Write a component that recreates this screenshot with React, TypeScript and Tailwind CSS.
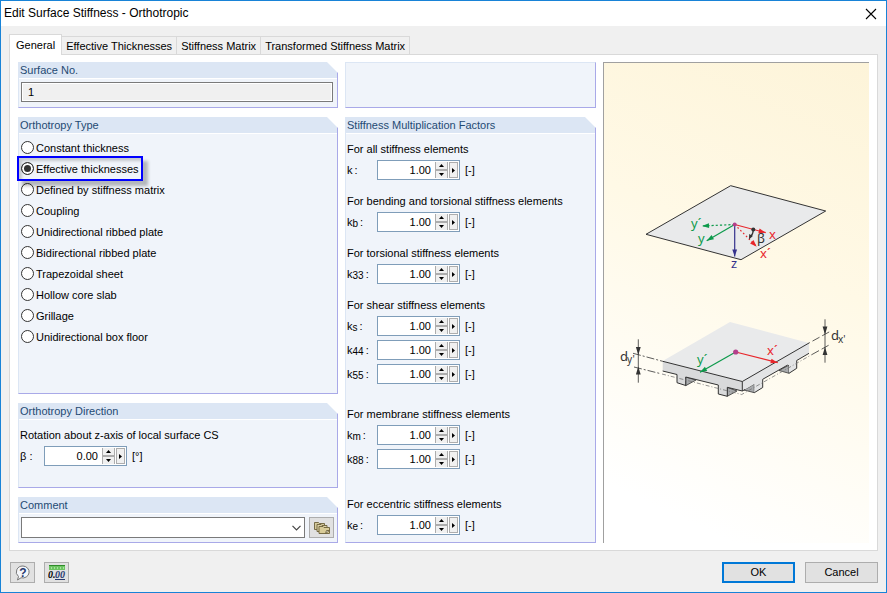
import { useState } from "react";
import type { ReactNode } from "react";

const tabs = ["General", "Effective Thicknesses", "Stiffness Matrix", "Transformed Stiffness Matrix"];

const orthotropyTypes = [
  "Constant thickness",
  "Effective thicknesses",
  "Defined by stiffness matrix",
  "Coupling",
  "Unidirectional ribbed plate",
  "Bidirectional ribbed plate",
  "Trapezoidal sheet",
  "Hollow core slab",
  "Grillage",
  "Unidirectional box floor",
];

const factorGroups = [
  { title: "For all stiffness elements", subs: [""], space: "" },
  { title: "For bending and torsional stiffness elements", subs: ["b"], space: "" },
  { title: "For torsional stiffness elements", subs: ["33"], space: "" },
  { title: "For shear stiffness elements", subs: ["s", "44", "55"], space: "" },
  { title: "For membrane stiffness elements", subs: ["m", "88"], space: "pt-[9px]" },
  { title: "For eccentric stiffness elements", subs: ["e"], space: "pt-[14px]" },
];

function Box({ title, className = "", children }: { title: string; className?: string; children: ReactNode }) {
  return (
    <section className={`relative border-r border-b border-l border-r-[#a9a9e8] border-b-[#a9a9e8] border-l-[#dce6f4] bg-[#f0f4fa] ${className}`}>
      {/* Cut corner */}
      <span className="absolute top-0 -right-px size-[11px] bg-white [clip-path:polygon(0_0,100%_0,100%_100%)]" />
      <h2 className="h-[17px] border-b border-white bg-[#dce6f4] pl-px text-[11px] leading-4 text-[#1f4a73]">{title}</h2>
      {children}
    </section>
  );
}

function Spinner({ id, initial }: { id: string; initial: string }) {
  const [value, setValue] = useState(initial);
  const step = (d: number) => setValue((v) => (Number(v) + d).toFixed(2));

  return (
    <div className="flex h-5 w-[83px] items-center border border-[#7f9db9] bg-white pr-px">
      <input
        id={id}
        value={value}
        onChange={(e) => setValue(e.target.value)}
        className="h-full min-w-0 flex-1 pr-1 text-right text-[11px] outline-none"
      />
      <div className="mr-px flex h-4 w-[13px] flex-col divide-y-2 divide-[#adadad] border-x border-[#adadad] bg-[#f0f0f0]">
        <button type="button" aria-label="Increase" onClick={() => step(1)} className="flex flex-1 items-center justify-center">
          <svg viewBox="0 0 5 3" className="h-[3px] w-[5px]"><path d="M0 3 2.5 0 5 3z" /></svg>
        </button>
        <button type="button" aria-label="Decrease" onClick={() => step(-1)} className="flex flex-1 items-center justify-center">
          <svg viewBox="0 0 5 3" className="h-[3px] w-[5px]"><path d="M0 0h5L2.5 3z" /></svg>
        </button>
      </div>
      <button type="button" aria-label="More" className="flex h-4 w-[9px] items-center justify-center border border-[#adadad] bg-[#f0f0f0]">
        <svg viewBox="0 0 3 5" className="h-[5px] w-[3px]"><path d="M0 0 3 2.5 0 5z" /></svg>
      </button>
    </div>
  );
}

function Arrow({ x1, y1, x2, y2, color, dash }: { x1: number; y1: number; x2: number; y2: number; color: string; dash?: string }) {
  const angle = (Math.atan2(y2 - y1, x2 - x1) * 180) / Math.PI;
  return (
    <g>
      <line x1={x1} y1={y1} x2={x2} y2={y2} stroke={color} strokeWidth="1.2" strokeDasharray={dash} />
      <path d="M0 0-7-2.4V2.4z" fill={color} transform={`translate(${x2} ${y2}) rotate(${angle})`} />
    </g>
  );
}

function Diagram() {
  const red = "#e8262b";
  const green = "#0d9a4b";
  const blue = "#35318c";
  const dark = "#333333";

  return (
    <svg viewBox="604 63 265 480" className="h-full w-full font-['Noto_Sans',sans-serif]" fontSize="13" role="img" aria-label="Orthotropy axes and thicknesses">
      {/* Plan of the surface */}
      <path d="M646 234.3 730.7 185.7 825.7 211 741 259.7z" fill="#e9eaeb" stroke="#333" strokeWidth="1" />
      <Arrow x1={734.7} y1={224.5} x2={702} y2={226} color={green} dash="2.2 2" />
      <Arrow x1={734.7} y1={224.5} x2={706.7} y2={240.7} color={green} />
      <Arrow x1={734.7} y1={224.5} x2={765.7} y2={232.7} color={red} />
      <Arrow x1={734.7} y1={224.5} x2={756.7} y2={246.7} color={red} dash="1.6 2.4" />
      <Arrow x1={734.7} y1={224.5} x2={734.7} y2={256.5} color={blue} />
      <path d="M753.3 229.3Q753.3 234 750.5 237" fill="none" stroke={dark} strokeWidth="1.2" />
      <path d="m749 239.5.2-5.5 3.6 2z" fill={dark} />
      <circle cx="753.3" cy="229.5" r="2" fill={dark} />
      <circle cx="734.7" cy="224.5" r="2" fill="#b4408b" />
      <text x="691" y="228" fill={green}>y´</text>
      <text x="698" y="243" fill={green}>y</text>
      <text x="769" y="239" fill={red}>x</text>
      <text x="760" y="258" fill={red}>x´</text>
      <text x="757" y="243" fill={dark}>β</text>
      <text x="731" y="268" fill={blue}>z</text>

      {/* Ribbed slab */}
      <path d="M662.7 361 730 322 809 343 742.3 381.5z" fill="#e9eaeb" />
      <g stroke="#333" strokeWidth=".8" strokeLinejoin="round">
        <path d="M685.7 377V385.7L696 380zM727.3 387.3V396.3L737 391z" fill="#a9abad" />
        <path d="M754.3 384V392.7L744 390zM789 365V373.3L779 370.5z" fill="#a9abad" />
      </g>
      <path d="M662.7 361.3V371L677 374.5V382.7L685.7 385.5V377L718.3 385V394L727.3 396.3V387.3L742.3 391V381.5z" fill="#d9dadb" />
      <path d="M742.3 381.5V391L754.3 384V392.7L762.7 387.5V379.3L789 364.5V373.3L796.7 368.3V360.5L809 353.3V343z" fill="#e3e4e5" />
      <g fill="none" stroke="#333" strokeWidth="1">
        <path d="M662.7 361.3 742.3 381.5 809 343M742.3 381.5V391" />
        <path d="M662.7 371 677 374.5V382.7L685.7 385.5V377L718.3 385V394L727.3 396.3V387.3L742.3 391" />
        <path d="M742.3 391 745 389.5M754.3 392.7 762.7 387.5V379.3L787.7 365M789 373.3 796.7 368.3V360.5L809 353.3" />
      </g>
      <g fill="none" stroke="#333" strokeWidth=".8">
        <path d="M633 353.3 662.7 361.3" strokeDasharray="8 2 2 2" />
        <path d="M809 343 830 331.5" strokeDasharray="8 3" strokeDashoffset="-4" />
        <path d="M634 367 660 373.5" strokeDasharray="8 2 2 2" />
        <path d="M662 374 741.7 394.5 812 354.5" stroke="#777" strokeDasharray="4 2 1 2" />
        <path d="M812 354.5 830 344.5" strokeDasharray="8 3" />
        <path d="M638.3 339.3V382.7M825 319.3V362.7" />
      </g>
      <g fill={dark}>
        <path d="m638.3 355-2.4-8h4.8zM638.3 366.5l-2.4 8h4.8zM825 334.5l-2.4-8h4.8zM825 347l-2.4 8h4.8z" />
        <text x="620" y="361">d</text>
        <text x="627" y="363" fontSize="10">y'</text>
        <text x="831" y="340">d</text>
        <text x="838" y="343" fontSize="10">x'</text>
      </g>
      <Arrow x1={735.7} y1={352} x2={777.7} y2={362.7} color={red} />
      <Arrow x1={735.7} y1={352} x2={700} y2={372.3} color={green} />
      <circle cx="735.7" cy="352" r="2.6" fill="#b4408b" />
      <text x="767" y="355" fill={red}>x´</text>
      <text x="697" y="364" fill={green}>y´</text>
    </svg>
  );
}

const iconButton = "flex h-[21px] w-[25px] items-center justify-center border border-[#adadad] bg-[#e1e1e1]";

export default function App() {
  const [tab, setTab] = useState(tabs[0]);
  const [type, setType] = useState("Effective thicknesses");

  return (
    <main className="flex min-h-screen flex-col border border-[#1883d7] bg-[#f0f0f0] font-['Liberation_Sans',Arial,sans-serif] text-[11px] leading-4 text-black">
      <header className="flex h-[25px] items-center justify-between bg-white pr-[9px] pl-[3px]">
        <h1 className="pb-px text-xs">Edit Surface Stiffness - Orthotropic</h1>
        <button type="button" aria-label="Close">
          <svg viewBox="0 0 12 12" className="size-3" fill="none" stroke="#000" strokeWidth="1.1">
            <path d="M1 1 11 11M11 1 1 11" />
          </svg>
        </button>
      </header>

      <div className="flex flex-1 flex-col px-2 pt-2">
        {/* Tabs */}
        <div role="tablist" className="flex items-end">
          {tabs.map((t) => (
            <button
              key={t}
              type="button"
              role="tab"
              aria-selected={t === tab}
              onClick={() => setTab(t)}
              className={
                t === tab
                  ? "relative -mb-px h-[21px] border border-b-0 border-[#d9d9d9] bg-white px-[6px] pb-px"
                  : "h-[18px] border-t border-r border-[#d9d9d9] px-[4px]"
              }
            >
              {t}
            </button>
          ))}
        </div>

        <div className="grid flex-1 grid-cols-[320fr_251fr_266fr] gap-[7px] border border-[#d9d9d9] bg-white px-2 py-[7px]">
          <div className="flex flex-col gap-[9px]">
            <Box title="Surface No." className="h-[46px]">
              <div className="px-[2px] pt-[3px] pr-[4px]">
                <input
                  aria-label="Surface No."
                  readOnly
                  value="1"
                  className="block h-5 w-full border border-[#7a7a7a] bg-[#f0f0f0] px-[6px] text-[11px] shadow-[inset_0_0_0_1px_#fff] outline-none"
                />
              </div>
            </Box>

            <Box title="Orthotropy Type" className="flex-1">
              <div className="flex flex-col items-start pt-[3px] pl-[2px]">
                {orthotropyTypes.map((t) => (
                  <label key={t} className="relative flex h-[21px] items-center gap-[2px]">
                    <input
                      type="radio"
                      name="orthotropy"
                      checked={t === type}
                      onChange={() => setType(t)}
                      className="size-[13px] appearance-none rounded-full border border-[#333] bg-white checked:bg-[#333] checked:shadow-[inset_0_0_0_2px_#fff]"
                    />
                    {t}
                    {t === "Effective thicknesses" && (
                      <span className="pointer-events-none absolute -inset-x-1 -inset-y-[2px] z-10 border-2 border-[#0000ff] shadow-[5px_5px_3px_rgba(0,0,0,0.25),inset_3px_3px_3px_rgba(0,0,0,0.18)]" />
                    )}
                  </label>
                ))}
              </div>
            </Box>

            <Box title="Orthotropy Direction" className="h-[85px]">
              <div className="pt-[7px] pl-px">
                <p>Rotation about z-axis of local surface CS</p>
                <div className="mt-[3px] flex items-center">
                  <label htmlFor="beta" className="w-6">β :</label>
                  <Spinner id="beta" initial="0.00" />
                  <span className="ml-[5px]">[°]</span>
                </div>
              </div>
            </Box>

            <Box title="Comment" className="h-[46px]">
              <div className="flex gap-1 pt-[3px] pr-[3px] pl-[2px]">
                <div className="relative flex-1">
                  <select aria-label="Comment" className="block h-[21px] w-full appearance-none border border-[#7a7a7a] bg-white px-1">
                    <option value=""></option>
                  </select>
                  <svg viewBox="0 0 9 6" className="pointer-events-none absolute top-2 right-1 h-[6px] w-[9px]" fill="none" stroke="#444" strokeWidth="1.2">
                    <path d="m.5.8 4 4 4-4" />
                  </svg>
                </div>
                <button type="button" aria-label="Comment library" className={iconButton}>
                  <svg viewBox="0 0 16 12" className="h-3 w-4" stroke="#6b6039" strokeWidth=".9">
                    <path d="M.5 .5h4l1 1h5v6H.5z" fill="#d5ca9c" />
                    <path d="M3 2.5h4l1 1h5v6H3z" fill="#ddd2a6" />
                    <path d="M5 4.5h4l1 1h5.500v6H5z" fill="#d9cc98" />
                    <path d="M11.500 11.500 12.500 8.500h3z" fill="#fff" />
                  </svg>
                </button>
              </div>
            </Box>
          </div>

          <div className="flex flex-col gap-[9px]">
            <div className="h-[46px] border border-t-[#dce6f4] border-r-[#a9a9e8] border-b-[#a9a9e8] border-l-[#dce6f4] bg-[#f0f4fa]" />
            <Box title="Stiffness Multiplication Factors" className="flex-1">
              <div className="flex flex-col gap-[13px] pt-[7px] pl-px">
                {factorGroups.map((g) => (
                  <div key={g.title} className={g.space}>
                    <p>{g.title}</p>
                    <div className="mt-[3px] flex flex-col gap-1">
                      {g.subs.map((s) => (
                        <div key={s} className="flex items-center">
                          <label htmlFor={`k${s}`} className="flex w-[30px]">
                            k
                            <span className="relative top-[2px] mr-[2px] text-[10px]">{s}</span>:
                          </label>
                          <Spinner id={`k${s}`} initial="1.00" />
                          <span className="ml-[5px]">[-]</span>
                        </div>
                      ))}
                    </div>
                  </div>
                ))}
              </div>
            </Box>
          </div>

          <div className="relative border-t border-l border-[#a0a0a0] bg-[linear-gradient(205deg,#fdf4d9,#fff9e6_40%,#ffffff_90%)]">
            <div className="absolute inset-0">
              <Diagram />
            </div>
          </div>
        </div>
      </div>

      <footer className="flex items-center px-2 pt-[11px] pb-[9px]">
        <button type="button" aria-label="Help" className={`${iconButton} ml-px`}>
          <svg viewBox="0 0 16 16" className="size-4">
            <path d="M8 1a6.500 6 0 1 1-2 11.800L2.500 15 3.500 11.500A6.500 6 0 0 1 8 1z" fill="#f4f6fa" stroke="#777" />
            <text x="8" y="11.500" textAnchor="middle" fontSize="12" fontWeight="bold" fill="#26386e">?</text>
          </svg>
        </button>
        <button type="button" aria-label="Units and decimal places" className={`${iconButton} ml-[9px]`}>
          <svg viewBox="0 0 18 17" className="h-[17px] w-[18px]">
            <path d="M1 1h16v5H1z" fill="#6cc461" />
            <path d="M1 1.500h16" stroke="#2f8b2a" />
            <path d="M3.500 3v2M6.500 3v2M9.500 3v2M12.500 3v2M15.500 3v2" stroke="#a5e29c" />
            <text x="0" y="14" fontSize="10" fontStyle="italic" fontWeight="bold" fontFamily="Liberation Serif, serif">0.</text>
            <text x="7" y="14" fontSize="10" fontStyle="italic" fontWeight="bold" fontFamily="Liberation Serif, serif" fill="#26386e">00</text>
            <path d="M7 15.500h10" stroke="#26386e" />
          </svg>
        </button>
        <div className="ml-auto flex gap-[10px]">
          <button type="button" className="h-[21px] w-[73px] border-2 border-[#0078d7] bg-[#e1e1e1] leading-none">OK</button>
          <button type="button" className="h-[21px] w-[73px] border border-[#adadad] bg-[#e1e1e1] leading-none">Cancel</button>
        </div>
      </footer>
    </main>
  );
}
